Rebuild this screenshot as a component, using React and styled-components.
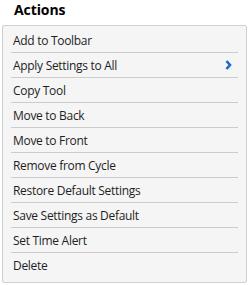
import React from "react";
import styled, { createGlobalStyle } from "styled-components";

const GlobalStyle = createGlobalStyle`
  body {
    margin: 0;
    background: #ffffff;
    font-family: "Open Sans", "Liberation Sans", sans-serif;
  }
`;

const Wrapper = styled.div`
  width: 252px;
  height: 285px;
  box-sizing: border-box;
  padding: 0 5px 0 2px;
`;

const Title = styled.h2`
  margin: 0;
  height: 25px;
  padding: 0 0 0 12px;
  font-size: 14px;
  font-weight: 700;
  line-height: 19px;
  letter-spacing: -0.1px;
  color: #000;
`;

const Panel = styled.div`
  background: #f5f5f5;
  border: 1px solid #cfcfcf;
  border-radius: 2px;
  padding: 2px 8px 4px 8px;
`;

const Item = styled.div`
  height: 24px;
  display: flex;
  align-items: center;
  justify-content: space-between;
  padding: 0 6px 0 2px;
  font-size: 12px;
  letter-spacing: -0.3px;
  color: #1e1e1e;
  border-bottom: 1px solid ${(p) => (p.$last ? "transparent" : "#cccccc")};
  cursor: pointer;
`;

const Chevron = () => (
  <svg width="7" height="10" viewBox="0 0 7 10">
    <path d="M1.5 1 L5 5 L1.5 9" fill="none" stroke="#1a6cc0" strokeWidth="2.6" />
  </svg>
);

const items = [
  "Add to Toolbar",
  "Apply Settings to All",
  "Copy Tool",
  "Move to Back",
  "Move to Front",
  "Remove from Cycle",
  "Restore Default Settings",
  "Save Settings as Default",
  "Set Time Alert",
  "Delete",
];

export default function App() {
  return (
    <Wrapper>
      <GlobalStyle />
      <Title>Actions</Title>
      <Panel>
        {items.map((label, i) => (
          <Item key={label} $last={i === items.length - 1}>
            <span>{label}</span>
            {label === "Apply Settings to All" && <Chevron />}
          </Item>
        ))}
      </Panel>
    </Wrapper>
  );
}
